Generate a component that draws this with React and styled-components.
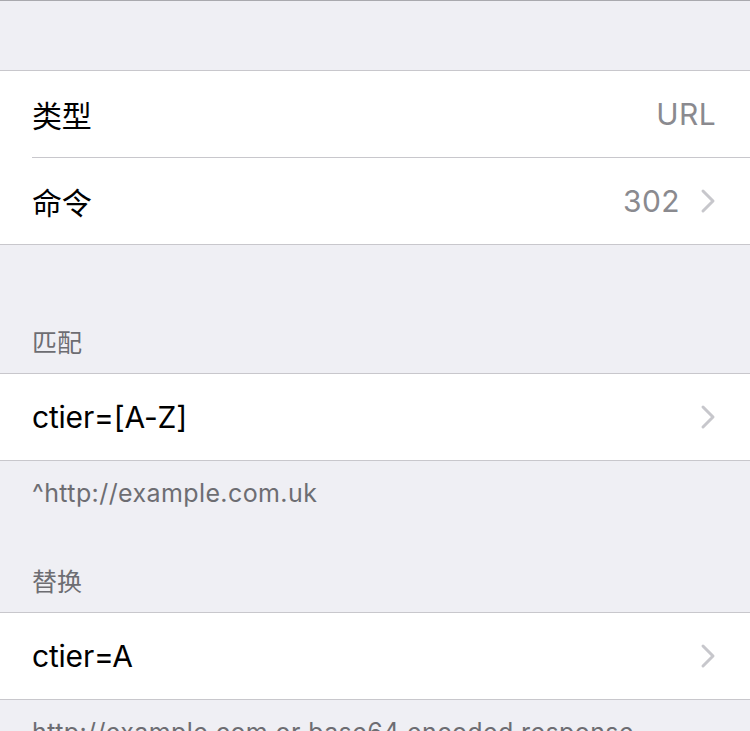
import styled, { createGlobalStyle } from 'styled-components'

const GlobalStyle = createGlobalStyle`
  html, body {
    margin: 0;
    padding: 0;
    background: #efeff4;
  }
  body {
    font-family: Inter, "Noto Sans CJK SC", sans-serif;
    -webkit-font-smoothing: antialiased;
  }
`;

const Page = styled.div`
  width: 750px;
  height: 731px;
  overflow: hidden;
  background: #efeff4;
  border-top: 1px solid #a9a9ae;
  box-sizing: border-box;
`;

const TopSpace = styled.div`
  height: 69px;
`;

const Group = styled.div`
  background: #fff;
  border-top: 1px solid #c8c7cc;
  border-bottom: 1px solid #c8c7cc;
`;

const Row = styled.div`
  display: flex;
  align-items: center;
  height: 86px;
  margin-left: 32px;
  padding-right: 34px;
  border-top: ${(p) => (p.$first ? 'none' : '1px solid #c8c7cc')};
`;

const Label = styled.div`
  flex: 1;
  font-size: 30px;
  color: #000;
  letter-spacing: -0.2px;
`;

const Value = styled.div`
  font-size: 30px;
  color: #8a8a8f;
  letter-spacing: 0.4px;
  margin-right: ${(p) => (p.$withChevron ? '20px' : '0')};
`;

const SectionHeader = styled.div`
  padding: ${(p) => p.$top}px 32px 15px;
  font-size: 25px;
  line-height: 30px;
  color: #6d6d72;
`;

const SectionFooter = styled.div`
  padding: 17px 32px 0;
  font-size: 25px;
  line-height: 30px;
  letter-spacing: 0.4px;
  color: #6d6d72;
  white-space: nowrap;
`;

const Chevron = () => (
  <svg width="16" height="26" viewBox="0 0 16 26">
    <path d="M3 3 L13 13 L3 23" fill="none" stroke="#c7c7cc" strokeWidth="3" strokeLinecap="round" strokeLinejoin="round" />
  </svg>
);

export default function App() {
  return (
    <>
      <GlobalStyle />
      <Page>
        <TopSpace />
        <Group>
          <Row $first>
            <Label>类型</Label>
            <Value>URL</Value>
          </Row>
          <Row>
            <Label>命令</Label>
            <Value $withChevron>302</Value>
            <Chevron />
          </Row>
        </Group>

        <SectionHeader $top={83}>匹配</SectionHeader>
        <Group>
          <Row $first>
            <Label>ctier=[A-Z]</Label>
            <Chevron />
          </Row>
        </Group>
        <SectionFooter>^http://example.com.uk</SectionFooter>

        <SectionHeader $top={59}>替换</SectionHeader>
        <Group>
          <Row $first>
            <Label>ctier=A</Label>
            <Chevron />
          </Row>
        </Group>
        <SectionFooter>http://example.com or base64 encoded response</SectionFooter>
      </Page>
    </>
  );
}
